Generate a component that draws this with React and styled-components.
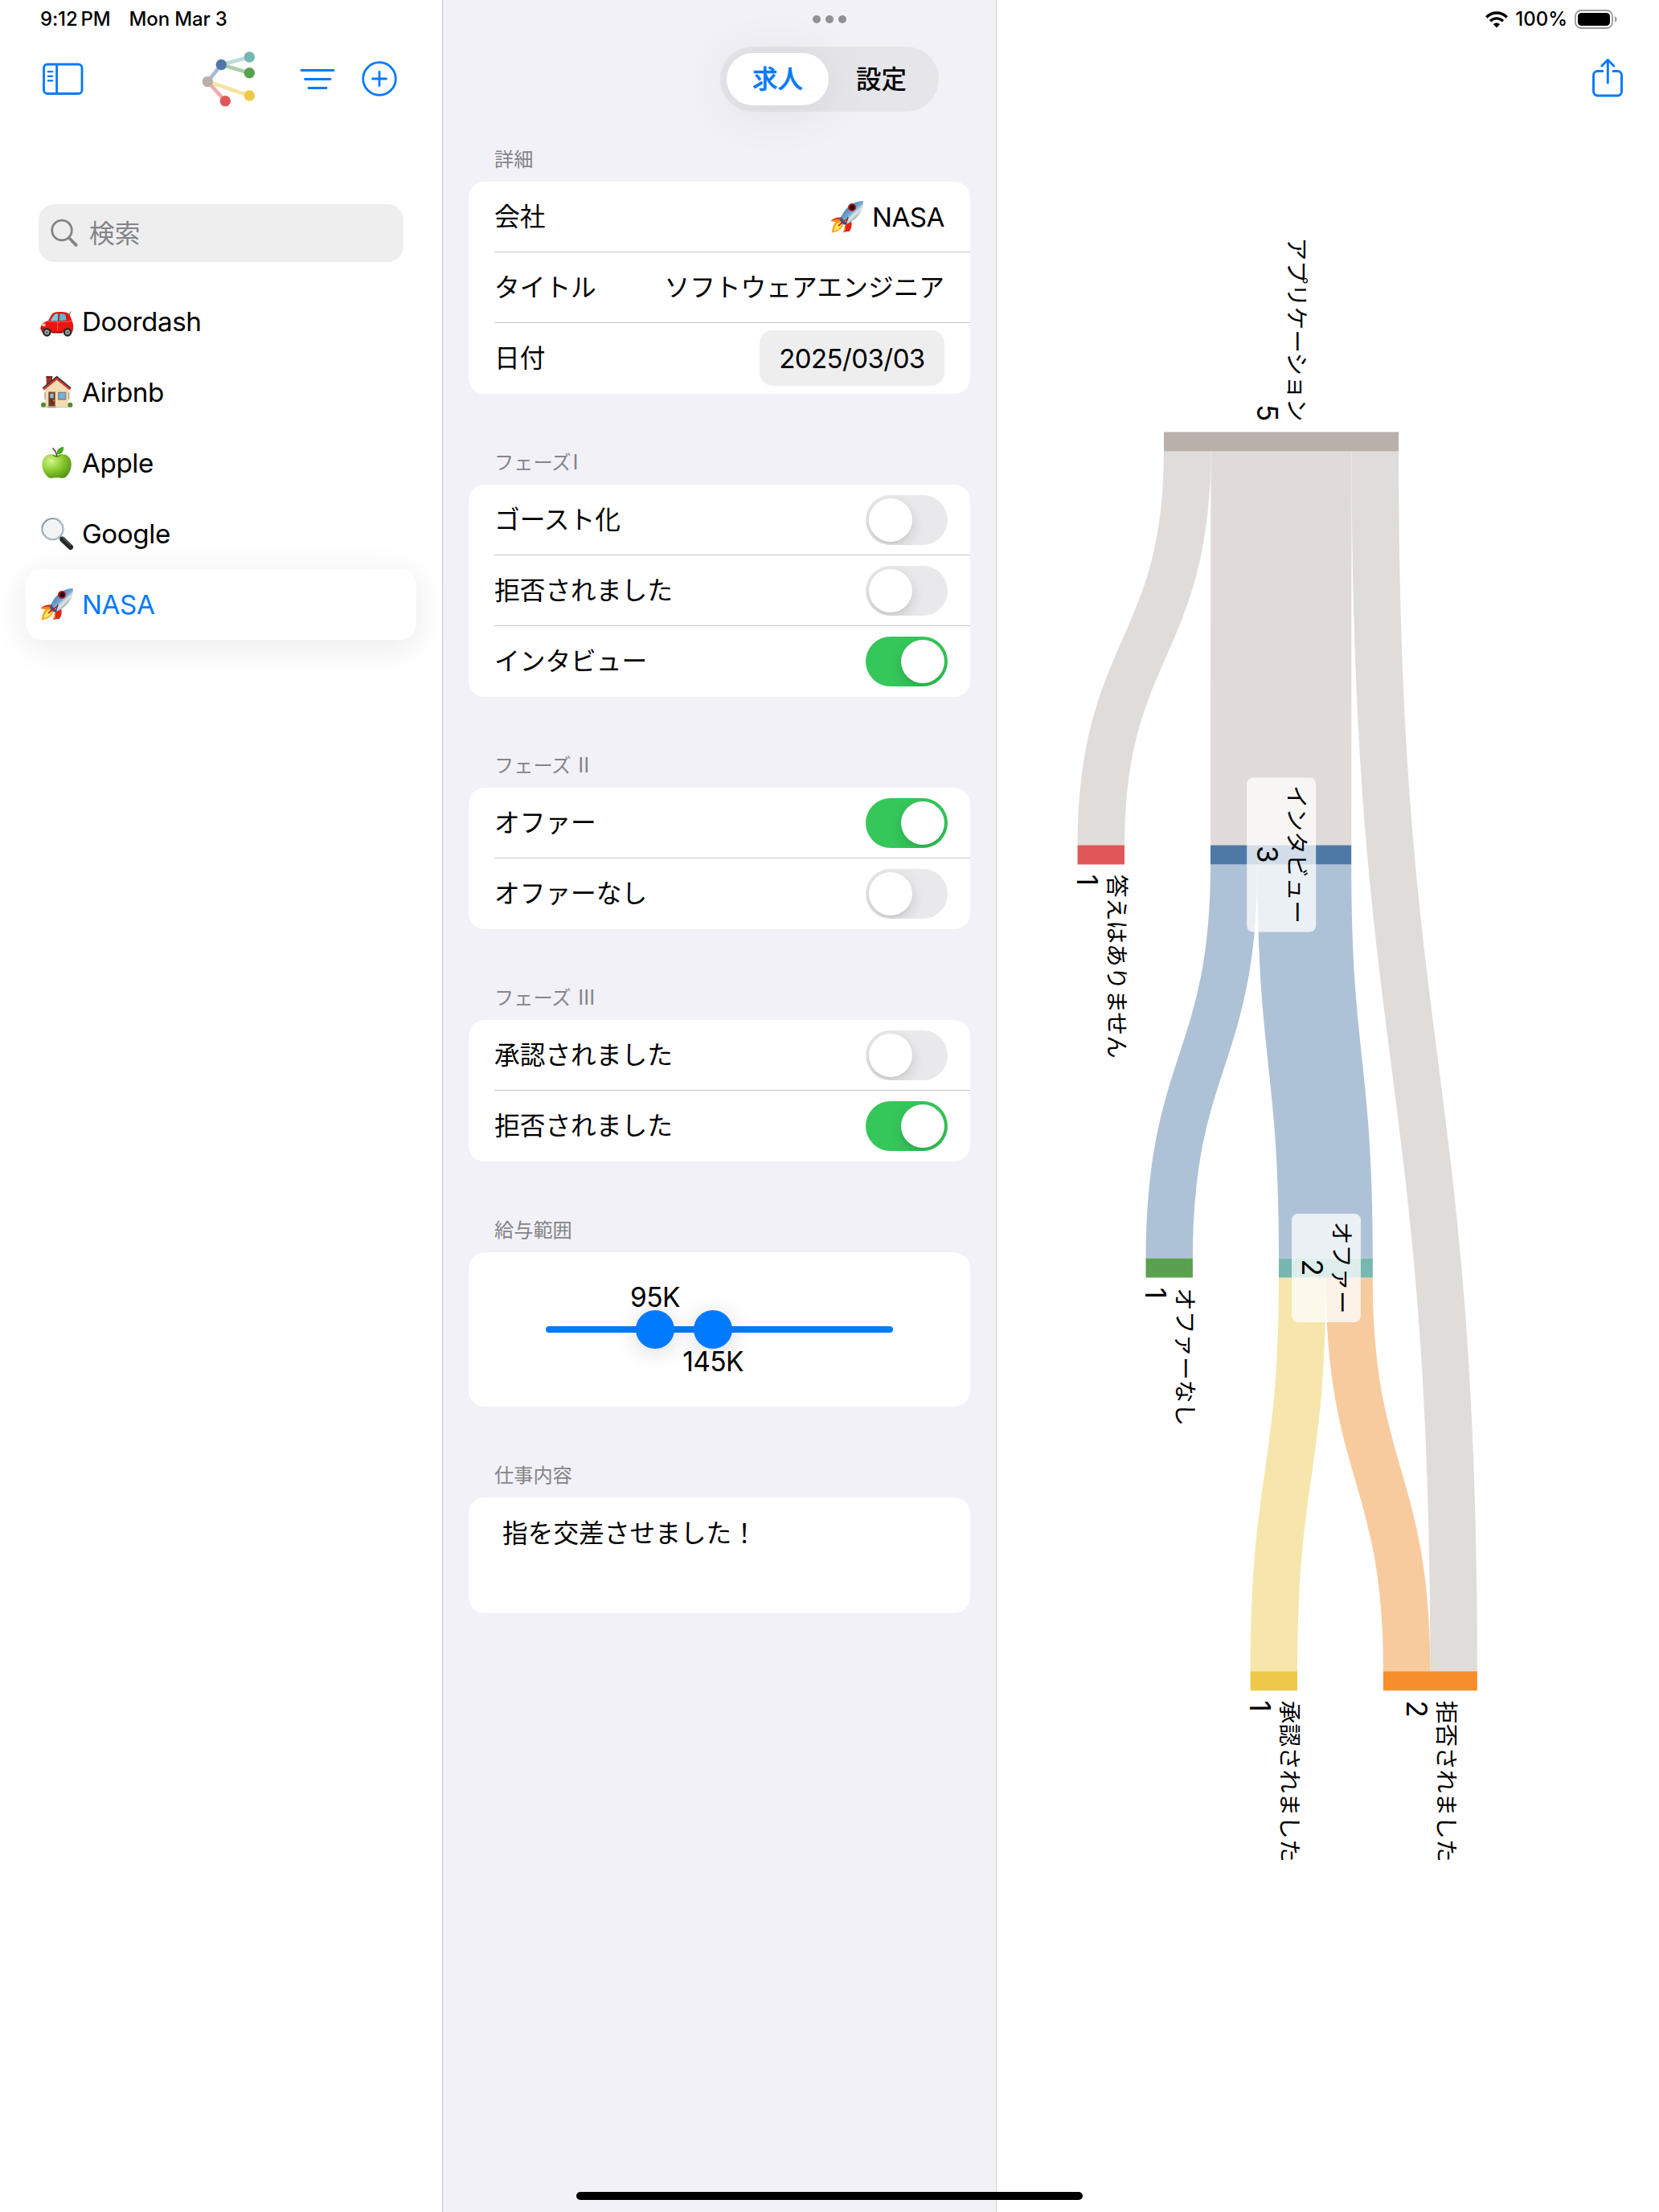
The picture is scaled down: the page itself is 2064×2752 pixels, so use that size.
import React from "react";
import styled, { createGlobalStyle } from "styled-components";

const BLUE = "#007aff";
const FONT = `Inter, "Noto Sans CJK JP", sans-serif`;

const GlobalStyle = createGlobalStyle`
  * { box-sizing: border-box; }
  body { margin: 0; background: #fff; font-family: ${FONT}; color: #000; }
  svg { flex-shrink: 0; }
`;

const Screen = styled.div`
  position: relative;
  display: grid;
  grid-template-columns: 550px 690px 1fr;
  width: 2064px;
  height: 2752px;
  overflow: hidden;
  background: #fff;
`;

const StatusBar = styled.div`
  display: flex;
  align-items: center;
  height: 48px;
  font-size: 24px;
  font-weight: 500;
  line-height: 30px;
  white-space: pre;
`;

/* ---------- sidebar ---------- */

const Sidebar = styled.aside`
  display: flex;
  flex-direction: column;
`;

const Clock = styled(StatusBar)`
  padding-left: 50px;
  gap: 23px;
  letter-spacing: -0.15px;
`;

const SidebarTools = styled.header`
  display: flex;
  align-items: center;
  height: 100px;
  padding-left: 52px;

  > :nth-child(2) { margin-left: 144px; }
  > :nth-child(3) { margin-left: 52px; }
  > :nth-child(4) { margin-left: 32.5px; }
`;

const SearchField = styled.div`
  display: flex;
  align-items: center;
  gap: 14px;
  margin: 106px 48px 30px;
  height: 72px;
  padding: 1px 0 0 15px;
  border-radius: 20px;
  background: #eeeeef;
  color: #848488;
  font-size: 31.7px;
  line-height: 40px;
  svg { margin-top: -2px; }
`;

const CompanyList = styled.nav`
  display: flex;
  flex-direction: column;
  padding: 0 32px;
`;

const CompanyRow = styled.div`
  display: flex;
  align-items: center;
  gap: 10px;
  height: 88px;
  padding-left: 18px;
  border-radius: 20px;
  font-size: 33.2px;
  line-height: 40px;
  letter-spacing: -0.4px;
  color: ${(p) => (p.$selected ? BLUE : "#000")};
  background: ${(p) => (p.$selected ? "#fff" : "transparent")};
  box-shadow: ${(p) => (p.$selected ? "0 8px 44px rgba(0,0,0,0.09)" : "none")};
`;

/* ---------- form column ---------- */

const FormColumn = styled.main`
  display: flex;
  flex-direction: column;
  background: #f2f1f7;
  border-left: 1px solid #c6c6c9;
  border-right: 1px solid #d2d2d5;
`;

const Grabber = styled(StatusBar)`
  gap: 6px;
  padding-left: 460px;
`;

const Dot = styled.span`
  width: 10px;
  height: 10px;
  border-radius: 50%;
  background: #909095;
`;

const SegmentBar = styled.div`
  display: flex;
  align-self: flex-end;
  gap: 2px;
  width: 272px;
  height: 81px;
  margin: 10px 71px 0 0;
  padding: 8px;
  border-radius: 41px;
  background: #e5e5ea;
`;

const Segment = styled.div`
  display: flex;
  align-items: center;
  justify-content: center;
  width: 128px;
  height: 65px;
  border-radius: 33px;
  font-size: 31.5px;
  line-height: 40px;
  font-weight: 500;
  color: ${(p) => (p.$active ? BLUE : "#000")};
  background: ${(p) => (p.$active ? "#fff" : "transparent")};
  box-shadow: ${(p) => (p.$active ? "0 6px 64px rgba(0,0,0,0.08)" : "none")};
  -webkit-text-stroke: ${(p) => (p.$active ? "0.5px currentColor" : "0")};
`;

const Sections = styled.div`
  display: flex;
  flex-direction: column;
  gap: 47px;
  padding: 21px 32px 0;
`;

const SectionTitle = styled.h2`
  margin: 0;
  height: 66px;
  padding: 19px 0 0 32px;
  font-size: 24.2px;
  line-height: 39px;
  font-weight: 400;
  color: #848489;
  white-space: pre;
`;

const Numeral = styled.span`
  margin-left: 2px;
  font-size: 26px;
  line-height: 1;
`;

const Card = styled.div`
  display: flex;
  flex-direction: column;
  border-radius: 20px;
  overflow: hidden;
  background: #fff;
`;

const Row = styled.div`
  display: flex;
  align-items: center;
  justify-content: space-between;
  height: 88px;
  margin-left: 32px;
  padding-right: ${(p) => p.$inset || 32}px;
  font-size: 31.7px;
  line-height: 40px;
  border-bottom: 1px solid #c6c6c8;
  &:last-child { border-bottom-color: transparent; }
`;

const Company = styled.span`
  display: flex;
  align-items: center;
  gap: 10px;
  font-size: 33.2px;
  letter-spacing: -0.5px;
`;

const DateField = styled.span`
  display: flex;
  align-items: center;
  justify-content: center;
  width: 230px;
  height: 69px;
  border-radius: 16px;
  background: #eeeeef;
  font-size: 33px;
  letter-spacing: -0.6px;
`;

const SwitchTrack = styled.span`
  display: flex;
  justify-content: ${(p) => (p.$on ? "flex-end" : "flex-start")};
  width: 102px;
  height: 62px;
  padding: 4px;
  border-radius: 31px;
  overflow: hidden;
  background: ${(p) => (p.$on ? "#35c75a" : "#e9e9eb")};
`;

const SwitchKnob = styled.span`
  width: 54px;
  height: 54px;
  border-radius: 50%;
  background: #fff;
  box-shadow: 0 6px 16px rgba(0, 0, 0, 0.14), 0 2px 2px rgba(0, 0, 0, 0.04);
`;

const SalaryCard = styled(Card)`
  height: 192px;
  align-items: center;
  justify-content: center;
`;

const Track = styled.div`
  position: relative;
  width: 432px;
  height: 8px;
  border-radius: 4px;
  background: ${BLUE};
`;

const Thumb = styled.span`
  position: absolute;
  top: -20px;
  left: ${(p) => p.$x - 24}px;
  width: 48px;
  height: 48px;
  border-radius: 50%;
  background: ${BLUE};
  box-shadow: 0 4px 28px rgba(0, 0, 0, 0.16);
`;

const ThumbLabel = styled.span`
  position: absolute;
  top: ${(p) => p.$y}px;
  left: ${(p) => p.$x - 60}px;
  width: 120px;
  text-align: center;
  font-size: 33.5px;
  line-height: 40px;
  letter-spacing: -0.6px;
`;

const NoteCard = styled(Card)`
  height: 144px;
  padding: 25px 42px;
  font-size: 31.7px;
  line-height: 40px;
`;

/* ---------- chart column ---------- */

const ChartColumn = styled.section`
  display: flex;
  flex-direction: column;
`;

const DeviceStatus = styled(StatusBar)`
  justify-content: flex-end;
  gap: 9px;
  padding-right: 51px;
`;

const ChartTools = styled.div`
  display: flex;
  justify-content: flex-end;
  align-items: center;
  height: 98px;
  padding-right: 44px;
`;

const ChartSvg = styled.svg`
  display: block;
  margin-top: 14px;
  font-family: ${FONT};
`;

const HomeIndicator = styled.div`
  position: absolute;
  bottom: 15px;
  left: 717px;
  width: 630px;
  height: 10px;
  border-radius: 5px;
  background: #000;
`;

/* ---------- toolbar icons ---------- */

const SidebarIcon = () => (
  <svg width="53" height="42" viewBox="0 0 53 42" fill="none" stroke={BLUE} strokeWidth="2.8">
    <rect x="2.5" y="3" width="47.5" height="36.5" rx="4.5" />
    <path d="M18.6 3V39.5" />
    <path d="M7.8 12.2h5.4M7.8 17.8h5.4M7.8 23.4h5.4" strokeWidth="2.2" strokeLinecap="round" />
  </svg>
);

const LogoIcon = () => (
  <svg width="72" height="70" viewBox="0 0 72 70" strokeWidth="4.6">
    <path d="M9.3 38.5L26.3 17.5" stroke="#a7bcd4" />
    <path d="M26.3 17.5L61.3 8" stroke="#bbdbd9" />
    <path d="M26.3 17.5L61.3 27.8" stroke="#acd0a7" />
    <path d="M9.3 38.5L61.3 56" stroke="#f6e4a4" />
    <path d="M9.3 38.5L31.3 62.8" stroke="#f0abac" />
    <circle cx="9.3" cy="38.5" r="6.7" fill="#bab0ab" />
    <circle cx="26.3" cy="17.5" r="6.7" fill="#4e79a7" />
    <circle cx="61.3" cy="8" r="6.7" fill="#76b7b2" />
    <circle cx="61.3" cy="27.8" r="6.7" fill="#59a14f" />
    <circle cx="61.3" cy="56" r="6.7" fill="#edc949" />
    <circle cx="31.3" cy="62.8" r="6.7" fill="#e15759" />
  </svg>
);

const FilterIcon = () => (
  <svg width="44" height="44" viewBox="0 0 44 44" stroke={BLUE} strokeWidth="2.8" strokeLinecap="round">
    <path d="M2 11.5h40M6.5 22.5h31.5M11 33.5h22" />
  </svg>
);

const AddIcon = () => (
  <svg width="44" height="44" viewBox="0 0 44 44" fill="none" stroke={BLUE} strokeWidth="2.8" strokeLinecap="round">
    <circle cx="22" cy="22" r="20.3" />
    <path d="M22 13.5v17M13.5 22h17" />
  </svg>
);

const SearchIcon = () => (
  <svg width="34" height="36" viewBox="0 0 34 36" fill="none" stroke="#848488">
    <circle cx="14" cy="14.5" r="12.3" strokeWidth="2.8" />
    <path d="M23 24l8.6 8.9" strokeWidth="3.8" strokeLinecap="round" />
  </svg>
);

const WifiIcon = () => (
  <svg width="28" height="21" viewBox="0 0 28 21" fill="none" stroke="#000">
    <path d="M1.3 7.4C8.5.2 19.5.2 26.7 7.4" strokeWidth="3.5" />
    <path d="M6 12.2c4.6-4.5 11.4-4.5 16 0" strokeWidth="3.4" />
    <path d="M14 20.4l-4.1-4.2c2.3-2.2 5.9-2.2 8.2 0z" fill="#000" stroke="none" />
  </svg>
);

const BatteryIcon = () => (
  <svg width="54" height="24" viewBox="0 0 54 24">
    <rect x="1" y="1" width="46" height="22" rx="7" fill="none" stroke="#9a9a9a" strokeWidth="1.8" />
    <rect x="4" y="4" width="40" height="16" rx="4.5" fill="#000" />
    <path d="M50 8.2c3.4 1.4 3.4 6.2 0 7.6z" fill="#9a9a9a" />
  </svg>
);

const ShareIcon = () => (
  <svg width="40" height="50" viewBox="0 0 40 50" fill="none" stroke={BLUE} strokeWidth="2.9" strokeLinecap="round" strokeLinejoin="round">
    <path d="M15 16.5H7.5a5 5 0 0 0-5 5V42a5 5 0 0 0 5 5h25a5 5 0 0 0 5-5V21.5a5 5 0 0 0-5-5H26" strokeLinecap="butt" />
    <path d="M20.3 31V3M12.8 10L20.3 2.5 27.8 10" />
  </svg>
);

/* ---------- company emoji ---------- */

const emoji = {
  car: (
    <>
      <path d="M108 40L114 26" stroke="#555" strokeWidth="3" />
      <path d="M2 92C0 74 10 66 30 60L42 38C48 29 58 27 74 27c20 0 30 2 36 12 6 12 8 20 12 30 2 10 2 24-1 32L8 104z" fill="#ea1410" />
      <path d="M36 60L49 40c4-7 9-8 20-8l-2 30H38z" fill="#7fc6dc" stroke="#a40808" strokeWidth="2" />
      <path d="M72 32c14 0 20 1 24 8l4 19-30 3z" fill="#66b5cd" stroke="#a40808" strokeWidth="2" />
      <path d="M30 62c20 4 60 2 90-1M66 64l-2 34M10 72l12-4" stroke="#ff6a5c" strokeWidth="3" fill="none" />
      <ellipse cx="13" cy="76" rx="8" ry="5" fill="#ffc9bd" />
      <path d="M2 88h10M44 104h40" stroke="#8f0705" strokeWidth="5" />
      <circle cx="25" cy="103" r="16" fill="#262626" />
      <circle cx="102" cy="103" r="16" fill="#262626" />
      <circle cx="25" cy="103" r="9" fill="#aaa" />
      <circle cx="102" cy="103" r="9" fill="#aaa" />
      <circle cx="25" cy="103" r="3.5" fill="#444" />
      <circle cx="102" cy="103" r="3.5" fill="#444" />
    </>
  ),
  house: (
    <>
      <path d="M23 5h22v34H23z" fill="#9c332b" />
      <path d="M22 3h24v6H22z" fill="#6f211d" />
      <path d="M18 50L62 12l44 40v66H18z" fill="#f2dcb4" />
      <path d="M18 62v28M107 62v28" stroke="#aaa093" strokeWidth="4" />
      <path d="M11 49L62 7l51 42" fill="none" stroke="#3d3735" strokeWidth="9" />
      <path d="M12 53L62 13l50 40" fill="none" stroke="#cf3a31" strokeWidth="7" />
      <path d="M30 61h27v54H30z" fill="#a27554" />
      <path d="M33 64h21v51H33z" fill="#6e3423" />
      <path d="M37 68h13v17H37z" fill="#88bde0" />
      <circle cx="51" cy="94" r="2.5" fill="#e9b94a" />
      <path d="M66 62h31v30H66z" fill="#94816d" />
      <path d="M70 66h23v21H70z" fill="#6eb1e4" />
      <path d="M28 115h31v6H28z" fill="#a49c94" />
      <circle cx="12" cy="110" r="9" fill="#4e8b2d" />
      <circle cx="112" cy="110" r="9" fill="#4e8b2d" />
      <path d="M3 119h118" stroke="#b7a88c" strokeWidth="2" />
    </>
  ),
  apple: (
    <>
      <path d="M62 37c14-11 36-9 47 6 14 20 7 54-13 72-10 9-20 3-34 3s-24 6-34-3C8 97 1 63 15 43c11-15 33-17 47-6z" fill="url(#appleSkin)" />
      <path d="M48 34c8 7 20 7 28 0" fill="none" stroke="#4c8d13" strokeWidth="4" />
      <path d="M62 37c-1-12-6-20-14-28" fill="none" stroke="#673a2c" strokeWidth="5" strokeLinecap="round" />
      <path d="M62 31C61 14 70 5 87 3c2 17-7 28-25 28z" fill="#3fa01c" />
      <path d="M64 29L83 8" stroke="#7fce4b" strokeWidth="2" />
    </>
  ),
  magnifier: (
    <>
      <path d="M72 74l12 12" stroke="#888" strokeWidth="9" />
      <path d="M83 84l30 29" stroke="#25292c" strokeWidth="20" strokeLinecap="round" />
      <path d="M84 78l30 28" stroke="#777d82" strokeWidth="3" strokeLinecap="round" />
      <circle cx="46" cy="45" r="39" fill="#f3f3f4" stroke="#6d747b" strokeWidth="7" />
      <circle cx="45" cy="44" r="40" fill="none" stroke="#c3d8ee" strokeWidth="4" />
      <circle cx="46" cy="45" r="35" fill="none" stroke="#fff" strokeWidth="2" />
    </>
  ),
  rocket: (
    <>
      <path d="M48 63C26 64 10 68 2 78c9 1 20 2 33 5z" fill="#e22412" />
      <path d="M2 78c10-7 22-8 37-5l-6 10z" fill="#f8881d" />
      <path d="M78 78c4 14 2 28-7 39-9 0-18 1-22 4 2-12 4-22 9-30z" fill="#e22412" />
      <path d="M52 99c7 1 7 10-3 21z" fill="#ffb22b" />
      <path d="M29 77C14 82 9 96 5 122c22-4 39-14 44-31z" fill="#f6a51c" />
      <path d="M33 84c-13 4-17 16-20 31 16-4 25-11 30-23z" fill="#ffe859" />
      <path d="M123 3C86 3 55 27 36 72c2 12 9 18 20 20C98 74 124 44 123 3z" fill="url(#hull)" />
      <path d="M36 72c2 12 9 18 20 20l8-5C53 82 46 74 42 61z" fill="#2f5a86" />
      <path d="M57 90C62 78 64 72 66 63" stroke="#234569" strokeWidth="4" fill="none" />
      <circle cx="81" cy="27" r="15" fill="#b71a1f" />
      <circle cx="82" cy="27" r="9.5" fill="#20110f" />
      <path d="M30 96C44 82 54 78 66 68" stroke="#c51a14" strokeWidth="5" fill="none" />
    </>
  ),
};

const Emoji = ({ name }) => (
  <svg width="42" height="42" viewBox="0 0 126 126">
    <defs>
      <radialGradient id="appleSkin" cx="0.3" cy="0.28" r="0.85">
        <stop offset="0" stopColor="#d5f58e" />
        <stop offset="0.45" stopColor="#8fcf33" />
        <stop offset="1" stopColor="#4b8c12" />
      </radialGradient>
      <linearGradient id="hull" x1="0.3" y1="0.3" x2="0.75" y2="0.8">
        <stop offset="0" stopColor="#4f86b8" />
        <stop offset="0.4" stopColor="#75a9d2" />
        <stop offset="0.62" stopColor="#e1e8ea" />
        <stop offset="1" stopColor="#7d8586" />
      </linearGradient>
    </defs>
    {emoji[name]}
  </svg>
);

/* ---------- sankey ---------- */

const UNIT = 58.4;
const BAR = 24;

const nodes = {
  applied: { x: 208, y: 377.5, size: 5, color: "#b9b0ab", label: "アプリケーション", place: "before" },
  silent: { x: 100.6, y: 891.5, size: 1, color: "#e15759", label: "答えはありません", place: "after" },
  interview: { x: 266, y: 891.5, size: 3, color: "#4e79a7", label: "インタビュー", place: "over", box: 192 },
  noOffer: { x: 185.5, y: 1405.5, size: 1, color: "#59a14f", label: "オファーなし", place: "after" },
  offer: { x: 351, y: 1405.5, size: 2, color: "#78b6b0", label: "オファー", place: "over", box: 135 },
  accepted: { x: 315.6, y: 1919.3, size: 1, color: "#edc949", label: "承認されました", place: "after" },
  rejected: { x: 481, y: 1919.3, size: 2, color: "#f58e2b", label: "拒否されました", place: "after" },
};

const links = [
  { from: "applied", to: "silent", out: 0, into: 0, size: 1, color: "#dfdcd9" },
  { from: "applied", to: "interview", out: 1, into: 0, size: 3, color: "#e0dbd8" },
  { from: "applied", to: "rejected", out: 4, into: 1, size: 1, color: "#dfdcd9" },
  { from: "interview", to: "noOffer", out: 0, into: 0, size: 1, color: "#aec2d7" },
  { from: "interview", to: "offer", out: 1, into: 0, size: 2, color: "#aec2d7" },
  { from: "offer", to: "accepted", out: 0, into: 0, size: 1, color: "#f7e6ab" },
  { from: "offer", to: "rejected", out: 1, into: 0, size: 1, color: "#f8cb9f" },
];

const linkPath = ({ from, to, out, into, size }) => {
  const a = nodes[from];
  const b = nodes[to];
  const x0 = a.x + (out + size / 2) * UNIT;
  const x1 = b.x + (into + size / 2) * UNIT;
  const y0 = a.y + BAR;
  const y1 = b.y;
  const mid = (y0 + y1) / 2;
  return `M${x0} ${y0}C${x0} ${mid} ${x1} ${mid} ${x1} ${y1}`;
};

const anchors = { before: "end", after: "start", over: "middle" };

const NodeLabel = ({ node }) => {
  const cx = node.x + (node.size * UNIT) / 2;
  const y = { before: node.y - 12.5, after: node.y + BAR + 13, over: node.y + BAR / 2 }[node.place];
  const anchor = anchors[node.place];
  return (
    <>
      {node.box && (
        <rect x={cx - 42.4} y={y - node.box / 2} width="86" height={node.box} rx="8" fill="#fff" fillOpacity="0.75" />
      )}
      <text transform={`translate(${cx + 9.4} ${y - 0.5}) rotate(90)`} textAnchor={anchor} fontSize="28.7">{node.label}</text>
      <text transform={`translate(${cx - 29.6} ${y - 0.7}) rotate(90)`} textAnchor={anchor} fontSize="35">{node.size}</text>
    </>
  );
};

const Sankey = () => (
  <ChartSvg width="824" height="2240" viewBox="0 0 824 2240">
    {links.map((l) => (
      <path key={l.from + l.to} d={linkPath(l)} fill="none" stroke={l.color} strokeWidth={l.size * UNIT} />
    ))}
    {Object.entries(nodes).map(([id, n]) => (
      <rect key={id} x={n.x} y={n.y} width={n.size * UNIT} height={BAR} fill={n.color} />
    ))}
    {Object.entries(nodes).map(([id, n]) => (
      <NodeLabel key={id} node={n} />
    ))}
  </ChartSvg>
);

/* ---------- page ---------- */

const Switch = ({ on }) => (
  <SwitchTrack $on={on}>
    <SwitchKnob />
  </SwitchTrack>
);

const companies = [
  ["car", "Doordash"],
  ["house", "Airbnb"],
  ["apple", "Apple"],
  ["magnifier", "Google"],
  ["rocket", "NASA"],
];

const phases = [
  ["フェーズ", "I", [["ゴースト化", false], ["拒否されました", false], ["インタビュー", true]]],
  ["フェーズ ", "II", [["オファー", true], ["オファーなし", false]]],
  ["フェーズ ", "III", [["承認されました", false], ["拒否されました", true]]],
];

export default function App() {
  return (
    <Screen>
      <GlobalStyle />
      <Sidebar>
        <Clock>
          <span>9:12{"\u2009"}PM</span>
          <span>Mon Mar 3</span>
        </Clock>
        <SidebarTools>
          <SidebarIcon />
          <LogoIcon />
          <FilterIcon />
          <AddIcon />
        </SidebarTools>
        <SearchField>
          <SearchIcon />
          検索
        </SearchField>
        <CompanyList>
          {companies.map(([icon, name]) => (
            <CompanyRow key={name} $selected={name === "NASA"}>
              <Emoji name={icon} />
              {name}
            </CompanyRow>
          ))}
        </CompanyList>
      </Sidebar>

      <FormColumn>
        <Grabber>
          <Dot />
          <Dot />
          <Dot />
        </Grabber>
        <SegmentBar>
          <Segment $active>求人</Segment>
          <Segment>設定</Segment>
        </SegmentBar>
        <Sections>
          <section>
            <SectionTitle>詳細</SectionTitle>
            <Card>
              <Row>
                会社
                <Company>
                  <Emoji name="rocket" />
                  NASA
                </Company>
              </Row>
              <Row>
                タイトル
                <span>ソフトウェアエンジニア</span>
              </Row>
              <Row>
                日付
                <DateField>2025/03/03</DateField>
              </Row>
            </Card>
          </section>
          {phases.map(([title, numeral, rows]) => (
            <section key={numeral}>
              <SectionTitle>
                {title}
                <Numeral>{numeral}</Numeral>
              </SectionTitle>
              <Card>
                {rows.map(([label, on]) => (
                  <Row key={label} $inset={28}>
                    {label}
                    <Switch on={on} />
                  </Row>
                ))}
              </Card>
            </section>
          ))}
          <section>
            <SectionTitle>給与範囲</SectionTitle>
            <SalaryCard>
              <Track>
                <Thumb $x={136} />
                <Thumb $x={208} />
                <ThumbLabel $x={136} $y={-56}>95K</ThumbLabel>
                <ThumbLabel $x={208} $y={24}>145K</ThumbLabel>
              </Track>
            </SalaryCard>
          </section>
          <section>
            <SectionTitle>仕事内容</SectionTitle>
            <NoteCard>指を交差させました！</NoteCard>
          </section>
        </Sections>
      </FormColumn>

      <ChartColumn>
        <DeviceStatus>
          <WifiIcon />
          <span>100%</span>
          <BatteryIcon />
        </DeviceStatus>
        <ChartTools>
          <ShareIcon />
        </ChartTools>
        <Sankey />
      </ChartColumn>
      <HomeIndicator />
    </Screen>
  );
}
